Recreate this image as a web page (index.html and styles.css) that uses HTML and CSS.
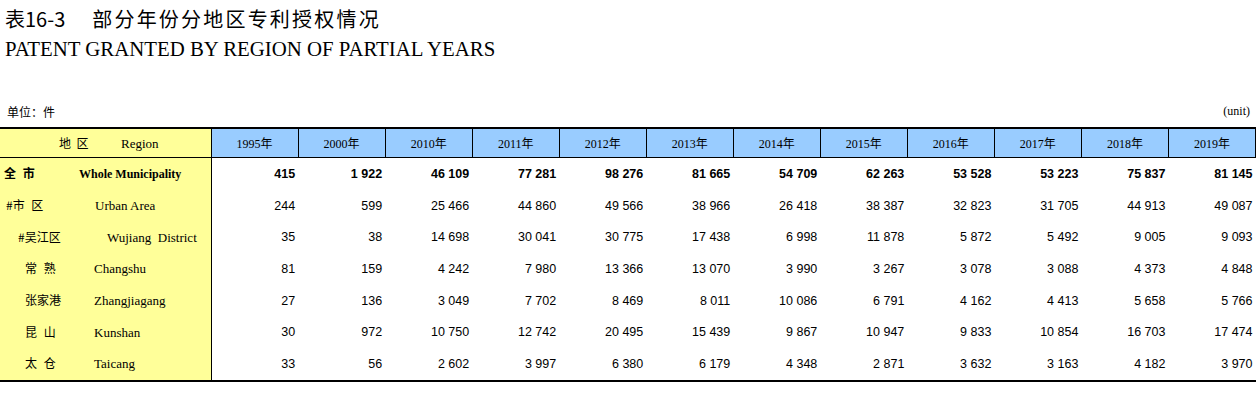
FILE: index.html
```html
<!DOCTYPE html>
<html lang="zh">
<head>
<meta charset="utf-8">
<title>表16-3 部分年份分地区专利授权情况</title>
<link rel="stylesheet" href="styles.css">
</head>
<body>
<div class="title-cn"><span class="tno">表16-3</span><span class="tname">部分年份分地区专利授权情况</span></div>
<div class="title-en">PATENT GRANTED BY REGION OF PARTIAL YEARS</div>
<div class="unit-row"><span class="unit-cn">单位：件</span><span class="unit-en">(unit)</span></div>
<table class="data">
<colgroup>
<col class="c-region">
<col class="c-year"><col class="c-year"><col class="c-year"><col class="c-year">
<col class="c-year"><col class="c-year"><col class="c-year"><col class="c-year">
<col class="c-year"><col class="c-year"><col class="c-year"><col class="c-year">
</colgroup>
<thead>
<tr>
<th class="region head"><span class="cn">地&nbsp; 区</span><span class="en">Region</span></th>
<th>1995年</th><th>2000年</th><th>2010年</th><th>2011年</th><th>2012年</th><th>2013年</th>
<th>2014年</th><th>2015年</th><th>2016年</th><th>2017年</th><th>2018年</th><th>2019年</th>
</tr>
</thead>
<tbody>
<tr class="total">
<td class="region r-total"><span class="cn">全 市</span><span class="en">Whole Municipality</span></td>
<td>415</td><td>1 922</td><td>46 109</td><td>77 281</td><td>98 276</td><td>81 665</td><td>54 709</td><td>62 263</td><td>53 528</td><td>53 223</td><td>75 837</td><td>81 145</td>
</tr>
<tr>
<td class="region r-urban"><span class="cn">#市 区</span><span class="en">Urban Area</span></td>
<td>244</td><td>599</td><td>25 466</td><td>44 860</td><td>49 566</td><td>38 966</td><td>26 418</td><td>38 387</td><td>32 823</td><td>31 705</td><td>44 913</td><td>49 087</td>
</tr>
<tr>
<td class="region r-sub"><span class="cn">#吴江区</span><span class="en">Wujiang&nbsp; District</span></td>
<td>35</td><td>38</td><td>14 698</td><td>30 041</td><td>30 775</td><td>17 438</td><td>6 998</td><td>11 878</td><td>5 872</td><td>5 492</td><td>9 005</td><td>9 093</td>
</tr>
<tr>
<td class="region r-city"><span class="cn">常 熟</span><span class="en">Changshu</span></td>
<td>81</td><td>159</td><td>4 242</td><td>7 980</td><td>13 366</td><td>13 070</td><td>3 990</td><td>3 267</td><td>3 078</td><td>3 088</td><td>4 373</td><td>4 848</td>
</tr>
<tr>
<td class="region r-city"><span class="cn">张家港</span><span class="en">Zhangjiagang</span></td>
<td>27</td><td>136</td><td>3 049</td><td>7 702</td><td>8 469</td><td>8 011</td><td>10 086</td><td>6 791</td><td>4 162</td><td>4 413</td><td>5 658</td><td>5 766</td>
</tr>
<tr>
<td class="region r-city"><span class="cn">昆 山</span><span class="en">Kunshan</span></td>
<td>30</td><td>972</td><td>10 750</td><td>12 742</td><td>20 495</td><td>15 439</td><td>9 867</td><td>10 947</td><td>9 833</td><td>10 854</td><td>16 703</td><td>17 474</td>
</tr>
<tr>
<td class="region r-city"><span class="cn">太 仓</span><span class="en">Taicang</span></td>
<td>33</td><td>56</td><td>2 602</td><td>3 997</td><td>6 380</td><td>6 179</td><td>4 348</td><td>2 871</td><td>3 632</td><td>3 163</td><td>4 182</td><td>3 970</td>
</tr>
</tbody>
</table>
</body>
</html>
```
FILE: styles.css
```css
html, body {
  margin: 0;
  padding: 0;
  background: #ffffff;
  color: #000000;
}
body {
  width: 1256px;
  font-family: "Liberation Serif", "Noto Sans CJK SC", serif;
}
.title-cn {
  padding: 4px 0 0 5px;
  height: 30px;
  line-height: 30px;
  font-family: "Noto Sans CJK SC", sans-serif;
  font-size: 20px;
  box-sizing: content-box;
}
.title-cn .tname {
  margin-left: 27px;
  letter-spacing: 2.2px;
}
.title-en {
  padding-left: 5px;
  height: 30px;
  line-height: 30px;
  font-family: "Liberation Serif", serif;
  font-size: 20.8px;
}
.unit-row {
  display: flex;
  justify-content: space-between;
  align-items: center;
  margin: 37px 0 6px 0;
  height: 20px;
  padding: 0 6px 0 7px;
}
.unit-cn {
  font-family: "Noto Sans CJK SC", sans-serif;
  font-size: 12px;
}
.unit-en {
  font-family: "Liberation Serif", serif;
  font-size: 12px;
}
table.data {
  width: 1256px;
  table-layout: fixed;
  border-collapse: collapse;
  border-top: 2px solid #000;
  border-bottom: 2px solid #000;
}
.c-region { width: 211px; }
.c-year { width: 87px; }
table.data th {
  height: 28px;
  padding: 0;
  background: #99ccff;
  border-right: 1px solid #000;
  border-bottom: 1px solid #000;
  font-family: "Liberation Serif", "Noto Sans CJK SC", serif;
  font-size: 12px;
  font-weight: normal;
  text-align: center;
  vertical-align: middle;
  white-space: nowrap;
}
table.data td {
  height: 31.7px;
  padding: 0 3px 0 0;
  font-family: "Liberation Sans", sans-serif;
  font-size: 12.5px;
  line-height: 14px;
  text-align: right;
  vertical-align: middle;
  white-space: nowrap;
}
table.data tr.total td {
  font-weight: bold;
}
table.data .region {
  background: #ffff99;
  border-right: 1px solid #000;
  text-align: left;
  padding: 0;
}
.region .cn {
  display: inline-block;
  font-family: "Noto Sans CJK SC", sans-serif;
  font-size: 12px;
  word-spacing: 4px;
}
.region .en {
  display: inline-block;
  font-family: "Liberation Serif", serif;
  font-size: 13px;
}
th.region.head { padding: 0 0 0 59px; }
th.region.head .cn { width: 62px; word-spacing: 0; }
.r-total { padding-left: 4px !important; }
.r-total .cn { width: 75px; font-weight: bold; }
.r-total .en { font-size: 12px; font-weight: bold; }
.r-urban { padding-left: 6px !important; }
.r-urban .cn { width: 89px; }
.r-sub { padding-left: 18px !important; }
.r-sub .cn { width: 89px; }
.r-city { padding-left: 25px !important; }
.r-city .cn { width: 69px; }
```
